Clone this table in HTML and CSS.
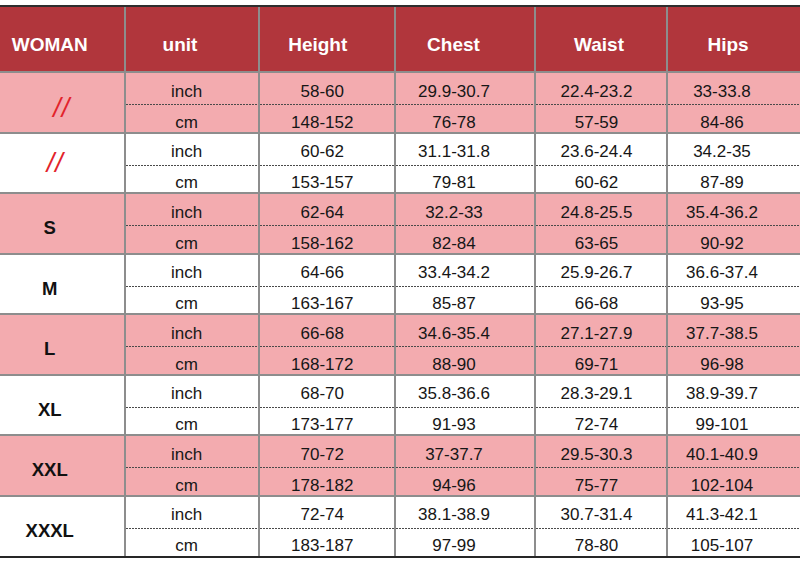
FILE: index.html
```html
<!DOCTYPE html>
<html>
<head>
<meta charset="utf-8">
<link rel="stylesheet" href="styles.css">
</head>
<body>
<table class="chart">
  <colgroup>
    <col class="c1"><col class="c2"><col class="c3"><col class="c4"><col class="c5"><col class="c6">
  </colgroup>
  <thead>
    <tr class="head">
      <th class="h1">WOMAN</th><th class="h2">unit</th><th class="h3">Height</th><th class="h4">Chest</th><th class="h5">Waist</th><th class="h6">Hips</th>
    </tr>
  </thead>
  <tbody class="pink">
    <tr class="in"><td rowspan="2" class="size slash s1">//</td><td class="u">inch</td><td class="v3">58-60</td><td class="v4">29.9-30.7</td><td class="v5">22.4-23.2</td><td class="v6">33-33.8</td></tr>
    <tr class="cm"><td class="u">cm</td><td class="v3">148-152</td><td class="v4">76-78</td><td class="v5">57-59</td><td class="v6">84-86</td></tr>
  </tbody>
  <tbody class="white">
    <tr class="in"><td rowspan="2" class="size slash s2">//</td><td class="u">inch</td><td class="v3">60-62</td><td class="v4">31.1-31.8</td><td class="v5">23.6-24.4</td><td class="v6">34.2-35</td></tr>
    <tr class="cm"><td class="u">cm</td><td class="v3">153-157</td><td class="v4">79-81</td><td class="v5">60-62</td><td class="v6">87-89</td></tr>
  </tbody>
  <tbody class="pink">
    <tr class="in"><td rowspan="2" class="size">S</td><td class="u">inch</td><td class="v3">62-64</td><td class="v4">32.2-33</td><td class="v5">24.8-25.5</td><td class="v6">35.4-36.2</td></tr>
    <tr class="cm"><td class="u">cm</td><td class="v3">158-162</td><td class="v4">82-84</td><td class="v5">63-65</td><td class="v6">90-92</td></tr>
  </tbody>
  <tbody class="white">
    <tr class="in"><td rowspan="2" class="size">M</td><td class="u">inch</td><td class="v3">64-66</td><td class="v4">33.4-34.2</td><td class="v5">25.9-26.7</td><td class="v6">36.6-37.4</td></tr>
    <tr class="cm"><td class="u">cm</td><td class="v3">163-167</td><td class="v4">85-87</td><td class="v5">66-68</td><td class="v6">93-95</td></tr>
  </tbody>
  <tbody class="pink">
    <tr class="in"><td rowspan="2" class="size">L</td><td class="u">inch</td><td class="v3">66-68</td><td class="v4">34.6-35.4</td><td class="v5">27.1-27.9</td><td class="v6">37.7-38.5</td></tr>
    <tr class="cm"><td class="u">cm</td><td class="v3">168-172</td><td class="v4">88-90</td><td class="v5">69-71</td><td class="v6">96-98</td></tr>
  </tbody>
  <tbody class="white">
    <tr class="in"><td rowspan="2" class="size">XL</td><td class="u">inch</td><td class="v3">68-70</td><td class="v4">35.8-36.6</td><td class="v5">28.3-29.1</td><td class="v6">38.9-39.7</td></tr>
    <tr class="cm"><td class="u">cm</td><td class="v3">173-177</td><td class="v4">91-93</td><td class="v5">72-74</td><td class="v6">99-101</td></tr>
  </tbody>
  <tbody class="pink">
    <tr class="in"><td rowspan="2" class="size">XXL</td><td class="u">inch</td><td class="v3">70-72</td><td class="v4">37-37.7</td><td class="v5">29.5-30.3</td><td class="v6">40.1-40.9</td></tr>
    <tr class="cm"><td class="u">cm</td><td class="v3">178-182</td><td class="v4">94-96</td><td class="v5">75-77</td><td class="v6">102-104</td></tr>
  </tbody>
  <tbody class="white last">
    <tr class="in"><td rowspan="2" class="size">XXXL</td><td class="u">inch</td><td class="v3">72-74</td><td class="v4">38.1-38.9</td><td class="v5">30.7-31.4</td><td class="v6">41.3-42.1</td></tr>
    <tr class="cm"><td class="u">cm</td><td class="v3">183-187</td><td class="v4">97-99</td><td class="v5">78-80</td><td class="v6">105-107</td></tr>
  </tbody>
</table>
</body>
</html>
```
FILE: styles.css
```css
html, body {
  margin: 0;
  padding: 0;
  background: #ffffff;
}

body {
  font-family: "Liberation Sans", Arial, sans-serif;
  color: #161616;
}

.chart {
  width: 800px;
  margin-top: 5px;
  table-layout: fixed;
  border-collapse: separate;
  border-spacing: 0;
  border-top: 2px solid #2e2e2e;
  border-bottom: 2px solid #262626;
}

.c1 { width: 125.5px; }
.c2 { width: 134px; }
.c3 { width: 136.5px; }
.c4 { width: 140px; }
.c5 { width: 132px; }
.c6 { width: 132px; }

.chart th,
.chart td {
  box-sizing: border-box;
  padding: 0;
  text-align: center;
  vertical-align: top;
  border-right: 2px solid #8d8d8d;
  white-space: nowrap;
}

.chart th:last-child,
.chart td:last-child {
  border-right: none;
}

/* header */
.chart .head th {
  height: 66px;
  background: #b1363c;
  color: #ffffff;
  font-size: 19px;
  font-weight: bold;
  line-height: 22px;
  padding-top: 27px;
  border-bottom: 2px solid #8d8d8d;
}
.chart .head .h1 { padding-right: 24px; }
.chart .head .h2 { padding-right: 23px; }
.chart .head .h3 { padding-right: 18px; }
.chart .head .h4 { padding-right: 23px; }
.chart .head .h5 { padding-right: 4px; }
.chart .head .h6 { padding-right: 12px; }

/* body */
.pink td { background-color: #f3abaf; }
.white td { background-color: #ffffff; }

.chart tbody td {
  font-size: 17px;
  line-height: 19px;
}

.chart .in td { height: 31px; padding-top: 8.5px; }
.chart .cm td { height: 29.5px; padding-top: 8.5px; border-bottom: 2px solid #8d8d8d; }
.chart .last .cm td { height: 28.5px; border-bottom: none; }

.chart .cm td {
  background-image: linear-gradient(90deg, #4a4a4a 55%, transparent 55%);
  background-size: 3px 1px;
  background-repeat: repeat-x;
  background-position: 0 0;
}

.chart tbody .u { padding-right: 10px; }
.chart tbody .v3 { padding-right: 9px; }
.chart tbody .v4 { padding-right: 22px; }
.chart tbody .v5 { padding-right: 9px; }
.chart tbody .v6 { padding-right: 24px; }

.chart tbody td.size {
  font-size: 18.5px;
  font-weight: bold;
  line-height: 22px;
  padding-top: 23px;
  padding-right: 24px;
  color: #111111;
  border-bottom: 2px solid #8d8d8d;
}
.chart .last td.size { border-bottom: none; }

.chart tbody td.slash {
  font-size: 27px;
  font-weight: normal;
  font-style: italic;
  line-height: 30px;
  color: #e2232b;
  letter-spacing: 1px;
}
.chart tbody td.s1 { padding-top: 20px; padding-right: 0; }
.chart tbody td.s2 { padding-top: 14px; padding-right: 13px; }
```
